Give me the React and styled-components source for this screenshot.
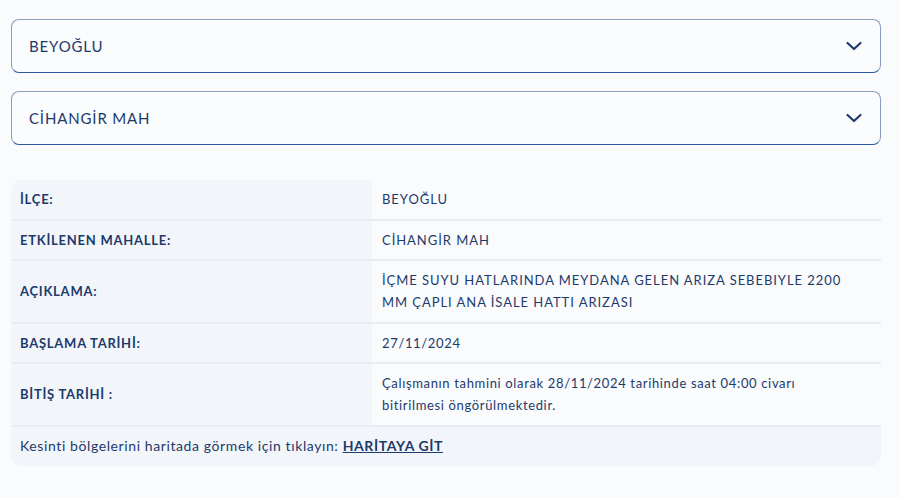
import React from 'react'
import styled, { createGlobalStyle } from 'styled-components'

const GlobalStyle = createGlobalStyle`
  body{
    margin: 0;
    background: #f9fbfd;
    font-family: Lato, "Noto Sans", sans-serif;
    color: #1d3a6b;
  }
`

const rows = [
  { label: 'İLÇE:', value: 'BEYOĞLU', caps: true },
  { label: 'ETKİLENEN MAHALLE:', value: 'CİHANGİR MAH', caps: true },
  { label: 'AÇIKLAMA:', value: 'İÇME SUYU HATLARINDA MEYDANA GELEN ARIZA SEBEBIYLE 2200 MM ÇAPLI ANA İSALE HATTI ARIZASI', caps: true },
  { label: 'BAŞLAMA TARİHİ:', value: '27/11/2024' },
  { label: 'BİTİŞ TARİHİ :', value: 'Çalışmanın tahmini olarak 28/11/2024 tarihinde saat 04:00 civarı bitirilmesi öngörülmektedir.' },
]

const Chevron = () => (
  <svg width="24" height="24" viewBox="0 0 24 24" fill="none" stroke="#1d3a6b" strokeWidth="2.2" strokeLinecap="round" strokeLinejoin="round">
    <path d="M5.5 9l6.5 6 6.5-6" />
  </svg>
)

const App = () => {
  return (
    <>
      <GlobalStyle />
      <Page>
        <Select>
          <SelectText>BEYOĞLU</SelectText>
          <Chevron />
        </Select>
        <Select>
          <SelectText>CİHANGİR MAH</SelectText>
          <Chevron />
        </Select>
        <Table>
          {rows.map((r) => (
            <Row key={r.label}>
              <Label>{r.label}</Label>
              <Value $caps={r.caps}>{r.value}</Value>
            </Row>
          ))}
          <Footer>
            Kesinti bölgelerini haritada görmek için tıklayın: <MapLink href="#">HARİTAYA GİT</MapLink>
          </Footer>
        </Table>
      </Page>
    </>
  )
}

export default App

const Page = styled.div`
  width: 870px;
  padding: 19px 0 0 11px;
  display: flex;
  flex-direction: column;
`
const Select = styled.div`
  height: 54px;
  box-sizing: border-box;
  display: flex;
  align-items: center;
  justify-content: space-between;
  padding: 0 14px 0 17px;
  border: 1.5px solid #8a9dc2;
  border-bottom-color: #2d579b;
  border-radius: 8px;
  background: #fafcfe;
  margin-bottom: 18px;
`
const SelectText = styled.div`
  font-size: 15px;
  letter-spacing: 0.85px;
  color: #1d3a6b;
`
const Table = styled.div`
  margin-top: 17px;
  border-radius: 10px;
  overflow: hidden;
  display: flex;
  flex-direction: column;
`
const Row = styled.div`
  display: grid;
  grid-template-columns: 361px 1fr;
  border-bottom: 2px solid #e9edf2;
`
const Label = styled.div`
  background: #f2f6fb;
  padding: 0 9px;
  display: flex;
  align-items: center;
  font-size: 13px;
  font-weight: 700;
  letter-spacing: 0.75px;
  color: #1d3a6b;
  min-height: 38.5px;
`
const Value = styled.div`
  background: #f9fbfd;
  padding: 8.25px 30px 8.25px 10px;
  font-size: 13px;
  line-height: 22px;
  letter-spacing: ${(p) => (p.$caps ? '0.95px' : '0.65px')};
  color: #1d3a6b;
  display: flex;
  align-items: center;
`
const Footer = styled.div`
  background: #f2f6fb;
  padding: 9px 9px 10px;
  font-size: 14px;
  line-height: 20px;
  letter-spacing: 0.6px;
  color: #1d3a6b;
`
const MapLink = styled.a`
  color: #1d3a6b;
  font-weight: 700;
  text-decoration: underline;
`
